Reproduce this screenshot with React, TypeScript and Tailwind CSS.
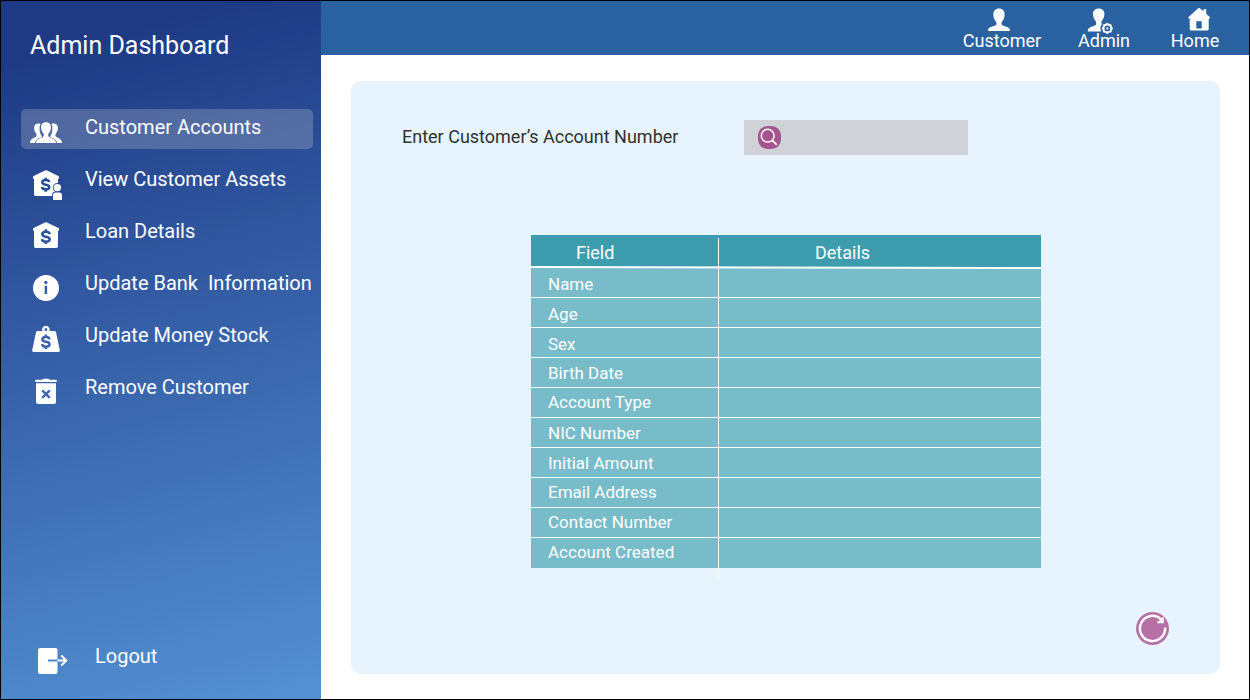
import type { ReactNode } from "react";

const DOLLAR =
  "M3.7 -2.6C3.5 -4.3 2.1 -5 0 -5C-2.1 -5 -3.6 -4.1 -3.6 -2.5C-3.6 -0.7 -2 -0.4 0 0C2.2 0.4 3.8 0.9 3.8 2.6C3.8 4.2 2.2 5 0 5C-2.3 5 -3.7 4.2 -3.9 2.4M0 -7.4V-4.6M0 4.6V7.4";

const PERSON =
  "M11.5 0C15.3 0 17.4 2.7 17.2 6.4C17.1 9.6 15.8 11.8 14.3 13.4C13.9 14.4 14 15.9 14.5 16.5C15.3 17.4 18.7 17.8 20.8 19C22.3 19.9 22.7 21.2 22.8 22.8H0.2C0.3 21.2 0.7 19.9 2.2 19C4.3 17.8 7.7 17.4 8.5 16.5C9 15.9 9.1 14.4 8.7 13.4C7.2 11.8 5.9 9.6 5.8 6.4C5.6 2.7 7.7 0 11.5 0Z";

const CENTER_PERSON =
  "M25 13.3C28.4 13.3 30.1 15.6 29.9 18.7C29.8 21.4 28.7 23.4 27.4 24.8C27 25.8 27.1 27 27.6 27.6C28.5 28.7 31.2 29.2 33 30.3C34.5 31.3 34.9 32.6 35 34H15C15.1 32.6 15.5 31.3 17 30.3C18.8 29.2 21.5 28.7 22.4 27.6C22.9 27 23 25.8 22.6 24.8C21.3 23.4 20.2 21.4 20.1 18.7C19.9 15.6 21.6 13.3 25 13.3Z";

function Dollar({ x, y, s = 1, color }: { x: number; y: number; s?: number; color: string }) {
  return (
    <path
      d={DOLLAR}
      transform={`translate(${x} ${y}) scale(${s})`}
      fill="none"
      stroke={color}
      strokeWidth="2.6"
    />
  );
}

function Glyph({ children }: { children: ReactNode }) {
  return (
    <svg width="48" height="40" viewBox="0 0 48 40" fill="white">
      {children}
    </svg>
  );
}

const HOUSE =
  "M24 9.5Q25 8.9 26 9.5L37.4 15Q38 15.3 38 16V17.8H37V33.3Q37 35 35.3 35H14.7Q13 35 13 33.3V17.8H12V16Q12 15.3 12.6 15Z";

const SIDE_PERSON =
  "M17.6 14.5C14.5 14.5 13 16.6 13.1 19.2C13.2 21.8 14.2 23.3 15.2 24.4C15.7 25.4 15.7 27.2 14.9 27.8C13.2 29 9.2 29.6 9 34H14C14.5 31 16.3 29.8 19.3 28.7C20.6 28.3 21 27.8 20.7 27C19.3 25.2 18.6 23 18.6 20C18.6 17.8 18.8 16 19.5 14.9C19 14.6 18.3 14.5 17.6 14.5Z";

const items: { label: string; icon: ReactNode; active?: boolean }[] = [
  {
    label: "Customer Accounts",
    active: true,
    icon: (
      <Glyph>
        <path d={SIDE_PERSON} />
        <path d={SIDE_PERSON} transform="translate(50 0) scale(-1 1)" />
        <path d={CENTER_PERSON} />
      </Glyph>
    ),
  },
  {
    label: "View Customer Assets",
    icon: (
      <Glyph>
        <path d={HOUSE} />
        <Dollar x={24.7} y={23.7} s={0.95} color="#294c98" />
        <circle cx="36.4" cy="26.7" r="4.6" fill="#294c98" />
        <path d="M31.2 40V33.5Q31.2 30.7 34 30.7H39Q41.8 30.7 41.8 33.5V40Z" fill="#294c98" />
        <circle cx="36.4" cy="26.6" r="3.7" />
        <path d="M32 39V34Q32 31.5 34.3 31.5H38.7Q41 31.5 41 34V39Z" />
      </Glyph>
    ),
  },
  {
    label: "Loan Details",
    icon: (
      <Glyph>
        <path d={HOUSE} />
        <Dollar x={24.9} y={23.7} color="#2d539d" />
      </Glyph>
    ),
  },
  {
    label: "Update Bank \u00a0Information",
    icon: (
      <Glyph>
        <circle cx="25" cy="23" r="13" />
        <circle cx="24.9" cy="17.4" r="1.6" fill="#345ca3" />
        <path d="M23.7 20.8H26.1V29H23.7Z" fill="#345ca3" />
      </Glyph>
    ),
  },
  {
    label: "Update Money Stock",
    icon: (
      <Glyph>
        <path
          fillRule="evenodd"
          d="M21.4 14A3.8 3.8 0 1 1 28.4 14H33.3Q34.6 14 35 15.3L38.8 33.2Q39 35 37.4 35H12.6Q11 35 11.2 33.2L15 15.3Q15.4 14 16.7 14ZM24.9 11.1A1.4 1.4 0 1 0 24.91 11.1Z"
        />
        <Dollar x={24.9} y={24.8} s={0.97} color="#3a63aa" />
      </Glyph>
    ),
  },
  {
    label: "Remove Customer",
    icon: (
      <Glyph>
        <path d="M14.3 10.7H21.2L22.5 9.7H27.5L28.8 10.7H35.7V13H14.3Z" />
        <path d="M15 14.2H35V33Q35 35 33 35H17Q15 35 15 33Z" />
        <path d="M21.2 21.3L28.8 28.9M28.8 21.3L21.2 28.9" stroke="#4069b0" strokeWidth="2.4" />
      </Glyph>
    ),
  },
];

const fields: { name: string; leading: string }[] = [
  { name: "Name", leading: "leading-[32px]" },
  { name: "Age", leading: "leading-[32px]" },
  { name: "Sex", leading: "leading-[32px]" },
  { name: "Birth Date", leading: "leading-[30px]" },
  { name: "Account Type", leading: "leading-[28px]" },
  { name: "NIC Number", leading: "leading-[30px]" },
  { name: "Initial Amount", leading: "leading-[30px]" },
  { name: "Email Address", leading: "leading-[28px]" },
  { name: "Contact Number", leading: "leading-[28px]" },
  { name: "Account Created", leading: "leading-[28px]" },
];

function Sidebar() {
  return (
    <aside className="flex w-80 flex-col bg-linear-[165deg,#1e3a85_8%,#5491d3_100%]">
      <h1 className="mt-[29px] ml-[29px] text-[25px] leading-[32px]">Admin Dashboard</h1>
      <nav className="mt-[47px] ml-5 flex w-[292px] flex-col gap-3">
        {items.map((it) => (
          <a
            key={it.label}
            className={`flex h-10 rounded-[5px] whitespace-nowrap ${it.active ? "bg-[#d9d9d9]/25" : ""}`}
          >
            <span className="w-16 shrink-0">{it.icon}</span>
            <span className="pt-1.5 text-[20px] leading-6">{it.label}</span>
          </a>
        ))}
      </nav>
      <a className="mt-auto mb-[22px] ml-9 flex h-10">
        <svg width="58" height="40" viewBox="0 0 58 40" fill="white" className="shrink-0">
          <path d="M3 11H18.5Q20.5 11 20.5 13V22.5H11V24.5H20.5V35Q20.5 37 18.5 37H3Q1 37 1 35V13Q1 11 3 11Z" />
          <path d="M20.5 23.5H29M24.3 18.6L29.2 23.5L24.3 28.4" fill="none" stroke="white" strokeWidth="2.1" />
        </svg>
        <span className="pt-[7px] text-[20px] leading-6">Logout</span>
      </a>
    </aside>
  );
}

function TopBar() {
  const teeth = [0, 45, 90, 135, 180, 225, 270, 315];
  return (
    <header className="flex h-[54px] justify-end bg-[#2a62a1] text-[18px] leading-5">
      <a className="flex w-[80px] flex-col items-center">
        <svg width="80" height="30" viewBox="0 0 80 30" fill="white">
          <path d={PERSON} transform="translate(25.6 7.6) scale(0.99)" />
        </svg>
        <span>Customer</span>
      </a>
      <a className="ml-[35px] flex w-[54px] flex-col items-center">
        <svg width="54" height="30" viewBox="0 0 54 30" fill="white" className="overflow-visible">
          <path
            d="M21.7 7.6C25.5 7.6 27.6 10.1 27.4 13.6C27.3 16.6 26.1 18.6 24.7 20C24.3 21.1 24.4 22.4 25 23.2C23.3 25.2 23 27.8 24.2 30.4H10.8C10.9 28.4 11.3 27.4 12.8 26.6C14.9 25.5 18 25 18.7 24.1C19.3 23.3 19.3 21.4 18.9 20.4C17.4 18.8 16.1 16.6 16 13.6C15.8 10.1 17.9 7.6 21.7 7.6Z"
          />
          <circle cx="30.3" cy="27.4" r="6.7" fill="#2a62a1" />
          <circle cx="30.3" cy="27.4" r="3.9" fill="none" stroke="white" strokeWidth="2" />
          <circle cx="30.3" cy="27.4" r="1.1" />
          {teeth.map((a) => (
            <path
              key={a}
              d="M29.3 21.9H31.3V23.6H29.3Z"
              transform={`rotate(${a} 30.3 27.4)`}
            />
          ))}
        </svg>
        <span>Admin</span>
      </a>
      <a className="mr-[27px] ml-[37px] flex w-[54px] flex-col items-center">
        <svg width="54" height="30" viewBox="0 0 54 30" fill="white">
          <path
            fillRule="evenodd"
            d="M30.2 7.2Q31 6.6 31.8 7.2L35.4 10.3V8.3H38.2V12.7L42 16.3Q42.5 17 41.6 17.4H40.7V28Q40.7 29.5 39.2 29.5H23.2Q21.7 29.5 21.7 28V17.4H20.8Q19.8 17 20.3 16.3ZM28.3 20.2H33.7V27.5H28.3Z"
          />
        </svg>
        <span>Home</span>
      </a>
    </header>
  );
}

function CustomerTable() {
  return (
    <section className="relative mt-20 ml-[180px] w-[510px] text-white">
      <div className="flex h-[33px] bg-[#3d9dae] text-[18px] leading-[36px]">
        <div className="w-[187px] pl-[45px]">Field</div>
        <div className="pl-[97px]">Details</div>
      </div>
      <div className="flex flex-col text-[17px]">
        {fields.map((f) => (
          <div
            key={f.name}
            className={`h-[30px] border-b border-white bg-[#78bbc9] pl-[17px] last:border-[#78bbc9] ${f.leading}`}
          >
            {f.name}
          </div>
        ))}
      </div>
      <svg className="absolute top-0 left-0 overflow-visible" width="510" height="342">
        <path d="M0 32L510 33" stroke="white" strokeWidth="2" />
        <path d="M187.5 3V342" stroke="white" strokeWidth="1" />
      </svg>
    </section>
  );
}

export default function App() {
  return (
    <div className="flex h-[700px] w-[1250px] overflow-hidden border border-black bg-white font-['Roboto',sans-serif] text-white">
      <Sidebar />
      <div className="flex flex-1 flex-col">
        <TopBar />
        <main className="mt-[26px] ml-[30px] flex h-[593px] w-[869px] flex-col rounded-[10px] bg-[#e7f4fe]">
          <div className="mt-[39px] ml-[51px] flex h-[35px]">
            <label className="w-[342px] text-[18px] leading-[34px] text-[#303030]">
              Enter Customer’s Account Number
            </label>
            <div className="w-[224px] bg-[#cfd2d6] pt-[6px] pl-[14px]">
              <svg width="23" height="23" viewBox="0 0 23 23" fill="none">
                <rect width="23" height="23" rx="9.5" fill="#a4558f" />
                <circle cx="9.7" cy="9.7" r="6.4" stroke="white" strokeWidth="1.5" />
                <path d="M14.3 14.3L18.8 18.8" stroke="white" strokeWidth="1.8" />
              </svg>
            </div>
          </div>
          <CustomerTable />
          <svg className="mt-auto mr-[51px] mb-[29px] self-end" width="33" height="33" viewBox="0 0 33 33">
            <circle cx="16.5" cy="16.5" r="16.5" fill="#b670a5" />
            <path d="M29.1 15.5A12.6 12.6 0 1 1 25.2 7.3" fill="none" stroke="white" strokeWidth="2.4" />
            <path d="M27.8 4.6V11.2H21.3V9.3H24.2L23 7.8L25.6 6Z" fill="white" />
          </svg>
        </main>
      </div>
    </div>
  );
}
